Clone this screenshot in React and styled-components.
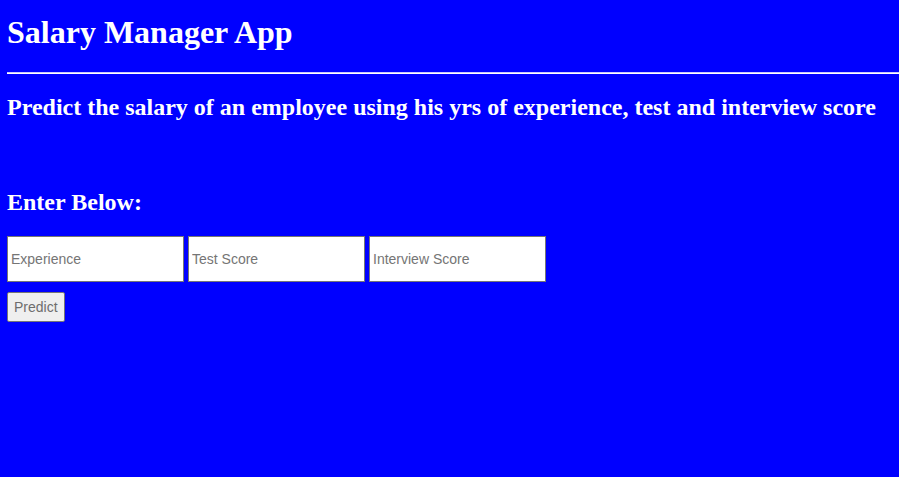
import React from "react";
import styled, { createGlobalStyle } from "styled-components";

const GlobalStyle = createGlobalStyle`
  html, body {
    background-color: #0000ff;
  }
  body {
    margin: 0;
    font-family: "Liberation Serif", "Times New Roman", serif;
    color: #ffffff;
  }
`;

const Page = styled.main`
  padding: 14px 0 8px 7px;
`;

const Title = styled.h1`
  font-size: 32px;
  font-weight: bold;
  margin: 0 0 21px;
`;

const Rule = styled.hr`
  border: none;
  border-top: 1px solid #c8c8ff;
  border-bottom: 1px solid #ffffff;
  margin: 0;
`;

const Heading = styled.h2`
  font-size: 24px;
  font-weight: bold;
  margin: ${({ $top }) => $top || "20px"} 0 20px;
`;

const Form = styled.form`
  display: flex;
  flex-direction: column;
  align-items: flex-start;
  gap: 10px;
`;

const Fields = styled.div`
  display: flex;
  gap: 4px;
`;

const Field = styled.input`
  box-sizing: border-box;
  width: 177px;
  height: 46px;
  padding: 1px 3px;
  border: 1px solid #767676;
  border-radius: 0;
  background: #ffffff;
  font-family: "Liberation Sans", Arial, sans-serif;
  font-size: 14px;
  color: #000;

  &::placeholder {
    color: #757575;
  }
`;

const PredictButton = styled.button`
  box-sizing: border-box;
  height: 30px;
  padding: 1px 6px;
  background: #efefef;
  border: 1px solid #767676;
  border-radius: 2px;
  font-family: "Liberation Sans", Arial, sans-serif;
  font-size: 14px;
  color: #6d6d6d;
`;

export default function App() {
  return (
    <Page>
      <GlobalStyle />
      <Title>Salary Manager App</Title>
      <Rule />
      <Heading>
        Predict the salary of an employee using his yrs of experience, test and
        interview score
      </Heading>
      <Heading $top="68px">Enter Below:</Heading>
      <Form onSubmit={(e) => e.preventDefault()}>
        <Fields>
          <Field type="text" placeholder="Experience" />
          <Field type="text" placeholder="Test Score" />
          <Field type="text" placeholder="Interview Score" />
        </Fields>
        <PredictButton type="submit">Predict</PredictButton>
      </Form>
    </Page>
  );
}
